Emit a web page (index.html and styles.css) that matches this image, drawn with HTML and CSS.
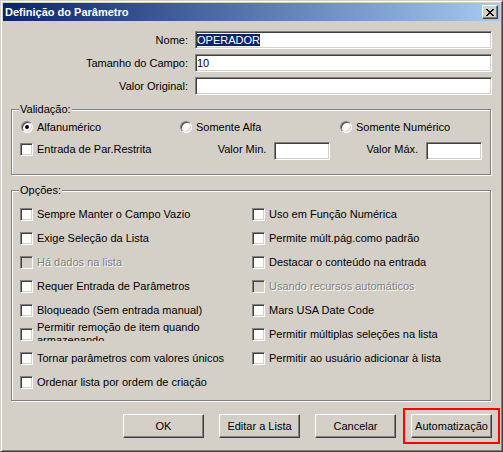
FILE: index.html
```html
<!DOCTYPE html>
<html lang="pt-br">

<head>
    <meta charset="UTF-8">
    <title>Definição do Parâmetro</title>
    <link rel="stylesheet" href="styles.css">
</head>

<body>
    <div class="window">
        <div class="titlebar">
            <span class="title">Definição do Parâmetro</span>
            <span class="close-btn">
                <svg width="8" height="7" viewBox="0 0 8 7" shape-rendering="crispEdges">
                    <path d="M0 0h2v1H0zM6 0h2v1H6zM1 1h2v1H1zM5 1h2v1H5zM2 2h4v1H2zM3 3h2v1H3zM2 4h4v1H2zM1 5h2v1H1zM5 5h2v1H5zM0 6h2v1H0zM6 6h2v1H6z" fill="#000"/>
                </svg>
            </span>
        </div>

        <div class="body">
            <div class="fields">
                <label>Nome:</label>
                <div class="textbox"><span class="selected">OPERADOR</span></div>
                <label>Tamanho do Campo:</label>
                <div class="textbox">10</div>
                <label>Valor Original:</label>
                <div class="textbox"></div>
            </div>

            <fieldset class="group validacao">
                <legend>Validação:</legend>
                <div class="radio-row">
                    <div class="choice"><span class="radio checked"></span>Alfanumérico</div>
                    <div class="choice"><span class="radio"></span>Somente Alfa</div>
                    <div class="choice"><span class="radio"></span>Somente Numérico</div>
                </div>
                <div class="limits-row">
                    <div class="choice restrita"><span class="check"></span>Entrada de Par.Restrita</div>
                    <span class="limit-label">Valor Min.</span>
                    <span class="textbox small"></span>
                    <span class="limit-label max">Valor Máx.</span>
                    <span class="textbox small"></span>
                </div>
            </fieldset>

            <fieldset class="group opcoes">
                <legend>Opções:</legend>
                <div class="cols">
                    <div class="col left">
                        <div class="choice opt"><span class="check"></span><span class="text">Sempre Manter o Campo Vazio</span></div>
                        <div class="choice opt"><span class="check"></span><span class="text">Exige Seleção da Lista</span></div>
                        <div class="choice opt disabled"><span class="check"></span><span class="text">Há dados na lista</span></div>
                        <div class="choice opt"><span class="check"></span><span class="text">Requer Entrada de Parâmetros</span></div>
                        <div class="choice opt"><span class="check"></span><span class="text">Bloqueado (Sem entrada manual)</span></div>
                        <div class="choice opt multi"><span class="check"></span><span class="text">Permitir remoção de item quando armazenando</span></div>
                        <div class="choice opt"><span class="check"></span><span class="text">Tornar parâmetros com valores únicos</span></div>
                        <div class="choice opt"><span class="check"></span><span class="text">Ordenar lista por ordem de criação</span></div>
                    </div>
                    <div class="col">
                        <div class="choice opt"><span class="check"></span><span class="text">Uso em Função Numérica</span></div>
                        <div class="choice opt"><span class="check"></span><span class="text">Permite múlt.pág.como padrão</span></div>
                        <div class="choice opt"><span class="check"></span><span class="text">Destacar o conteúdo na entrada</span></div>
                        <div class="choice opt disabled"><span class="check"></span><span class="text">Usando recursos automáticos</span></div>
                        <div class="choice opt"><span class="check"></span><span class="text">Mars USA Date Code</span></div>
                        <div class="choice opt"><span class="check"></span><span class="text">Permitir múltiplas seleções na lista</span></div>
                        <div class="choice opt"><span class="check"></span><span class="text">Permitir ao usuário adicionar à lista</span></div>
                    </div>
                </div>
            </fieldset>

            <div class="buttons">
                <button class="btn">OK</button>
                <button class="btn">Editar a Lista</button>
                <button class="btn">Cancelar</button>
                <span class="highlight"><button class="btn">Automatização</button></span>
            </div>
        </div>
    </div>
</body>

</html>
```

FILE: styles.css
```css
body {
    margin: 0;
    font-family: "Liberation Sans", Arial, sans-serif;
    font-size: 11px;
    color: #000;
    background: #d4d0c8;
}

.window {
    width: 503px;
    height: 452px;
    box-sizing: border-box;
    background: #d4d0c8;
    border: 1px solid;
    border-color: #d4d0c8 #404040 #404040 #d4d0c8;
    box-shadow: inset 1px 1px #fff, inset -1px -1px #808080;
    padding: 2px;
}

.titlebar {
    height: 18px;
    display: flex;
    align-items: center;
    justify-content: space-between;
    padding: 0 2px;
    background: linear-gradient(to right, #0a246a, #a6caf0);
}

.title {
    color: #fff;
    font-weight: bold;
    font-size: 11px;
}

.close-btn {
    width: 16px;
    height: 14px;
    box-sizing: border-box;
    display: flex;
    align-items: center;
    justify-content: center;
    background: #d4d0c8;
    border: 1px solid;
    border-color: #fff #404040 #404040 #fff;
    box-shadow: inset -1px -1px #808080;
}

.body {
    padding: 10px 9px 0 8px;
}

.fields {
    display: grid;
    grid-template-columns: 177px 297px;
    column-gap: 7px;
    row-gap: 5px;
    align-items: center;
}

.fields label {
    text-align: right;
}

.textbox {
    height: 18px;
    box-sizing: border-box;
    background: #fff;
    border: 1px solid;
    border-color: #808080 #fff #fff #808080;
    box-shadow: inset 1px 1px #404040, inset -1px -1px #d4d0c8;
    padding: 0 1px;
    line-height: 16px;
    white-space: nowrap;
}

.selected {
    background: #0a246a;
    color: #fff;
}

.group {
    margin: 8px 0 0;
    padding: 0 8px 14px;
    border: 1px solid #808080;
    box-shadow: inset 1px 1px #fff, 1px 1px #fff;
    min-width: 0;
}

.group legend {
    margin-left: -1px;
    padding: 0 1px;
    line-height: 13px;
    background: #d4d0c8;
}

.choice {
    display: flex;
    align-items: center;
    gap: 4px;
    line-height: 13px;
}

.check {
    flex: none;
    width: 13px;
    height: 13px;
    box-sizing: border-box;
    background: #fff;
    border: 1px solid;
    border-color: #808080 #fff #fff #808080;
    box-shadow: inset 1px 1px #404040, inset -1px -1px #d4d0c8;
}

.radio {
    flex: none;
    width: 12px;
    height: 12px;
    box-sizing: border-box;
    border-radius: 50%;
    background: #fff;
    border: 1px solid;
    border-color: #808080 #fff #fff #808080;
    box-shadow: inset 1px 1px #404040, inset -1px -1px #d4d0c8;
    display: flex;
    align-items: center;
    justify-content: center;
}

.radio.checked::after {
    content: "";
    width: 4px;
    height: 4px;
    border-radius: 50%;
    background: #000;
}

.radio-row {
    display: grid;
    grid-template-columns: 159px 160px auto;
    align-items: center;
    height: 22px;
    padding-left: 1px;
}

.limits-row {
    display: flex;
    align-items: center;
    height: 22px;
}

.restrita {
    width: 188px;
}

.limit-label {
    width: 59px;
    text-align: right;
    white-space: nowrap;
    margin-right: 8px;
}

.limit-label.max {
    width: 61px;
    margin-left: 27px;
}

.textbox.small {
    width: 56px;
    margin-top: 4px;
}

.validacao + .opcoes {
    margin-top: 9px;
}

.opcoes {
    padding-top: 5px;
    padding-bottom: 6px;
}

.cols {
    display: grid;
    grid-template-columns: 232px auto;
}

.opt {
    height: 24px;
}

.left .text {
    width: 200px;
}

.opt.multi .text {
    align-self: flex-start;
    margin-top: -1px;
    height: 20px;
    overflow: hidden;
}

.opt.disabled .check {
    background: #d4d0c8;
}

.opt.disabled .text {
    color: #808080;
    text-shadow: 1px 1px #fff;
}

.buttons {
    display: flex;
    justify-content: flex-end;
    gap: 15px;
    margin: 13px -1px 0 0;
}

.btn {
    width: 81px;
    height: 24px;
    box-sizing: border-box;
    padding: 0;
    font: inherit;
    color: #000;
    background: #d4d0c8;
    border: 1px solid;
    border-color: #fff #404040 #404040 #fff;
    box-shadow: inset -1px -1px #808080;
}

.highlight {
    position: relative;
    display: flex;
}

.highlight::after {
    content: "";
    position: absolute;
    top: -6px;
    bottom: -6px;
    left: -8px;
    right: -8px;
    border: 2px solid #f00;
}
```
